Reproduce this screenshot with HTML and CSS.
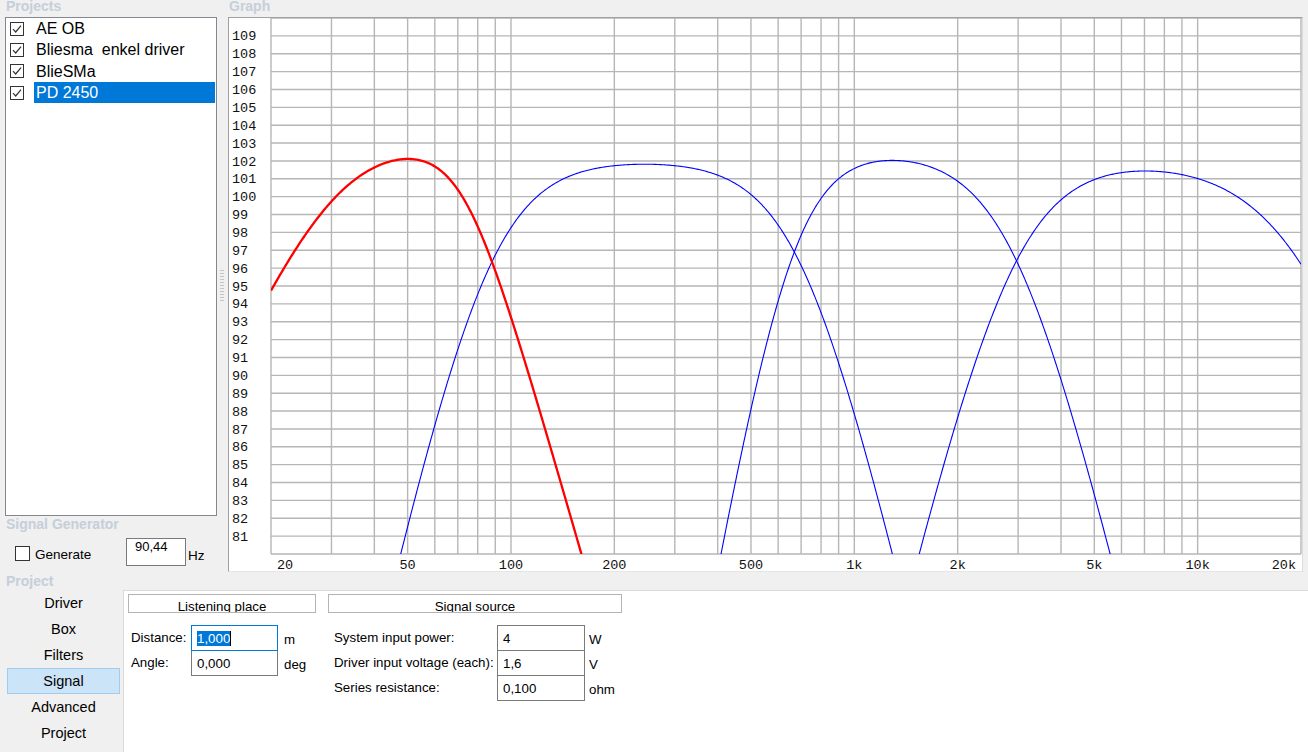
FILE: index.html
```html
<!DOCTYPE html>
<html>
<head>
<meta charset="utf-8">
<title>Speaker designer</title>
<link rel="stylesheet" href="styles.css">
</head>
<body>
<div class="top">
  <div class="left">
    <div class="hdr first">Projects</div>
    <div class="listbox">
      <div class="item">
        <svg class="chk" width="14" height="14" viewBox="0 0 14 14"><rect x="0.5" y="0.5" width="13" height="13" fill="#fff" stroke="#333"/><path d="M3 7.2 L5.7 10 L11 3.6" fill="none" stroke="#333" stroke-width="1.2"/></svg>
        <span class="lbl">AE OB</span>
      </div>
      <div class="item">
        <svg class="chk" width="14" height="14" viewBox="0 0 14 14"><rect x="0.5" y="0.5" width="13" height="13" fill="#fff" stroke="#333"/><path d="M3 7.2 L5.7 10 L11 3.6" fill="none" stroke="#333" stroke-width="1.2"/></svg>
        <span class="lbl">Bliesma&nbsp; enkel driver</span>
      </div>
      <div class="item">
        <svg class="chk" width="14" height="14" viewBox="0 0 14 14"><rect x="0.5" y="0.5" width="13" height="13" fill="#fff" stroke="#333"/><path d="M3 7.2 L5.7 10 L11 3.6" fill="none" stroke="#333" stroke-width="1.2"/></svg>
        <span class="lbl">BlieSMa</span>
      </div>
      <div class="item">
        <svg class="chk" width="14" height="14" viewBox="0 0 14 14"><rect x="0.5" y="0.5" width="13" height="13" fill="#fff" stroke="#333"/><path d="M3 7.2 L5.7 10 L11 3.6" fill="none" stroke="#333" stroke-width="1.2"/></svg>
        <span class="lbl selected">PD 2450</span>
      </div>
    </div>
    <div class="hdr">Signal Generator</div>
    <div class="gen">
      <div class="gencheck">
        <span class="box"></span>
        <span class="genlbl">Generate</span>
      </div>
      <div class="gentb">90,44</div>
      <span class="hz">Hz</span>
    </div>
  </div>
  <div class="splitter"><div class="grip"></div></div>
  <div class="graphcol">
    <div class="hdr first">Graph</div>
    <div class="graphbox">
      <svg id="graph" width="1073" height="553" viewBox="229 18 1073 553"></svg>
    </div>
  </div>
</div>
<div class="hdr proj">Project</div>
<div class="bottom">
  <div class="nav">
    <div>Driver</div>
    <div>Box</div>
    <div>Filters</div>
    <div class="sel">Signal</div>
    <div>Advanced</div>
    <div>Project</div>
  </div>
  <div class="content">
    <div class="col col1">
      <div class="grp">Listening place</div>
      <div class="rows">
        <div class="row">
          <span class="flbl">Distance:</span>
          <div class="tb focus"><span class="seltext">1,000</span><span class="caret"></span></div>
          <span class="unit">m</span>
        </div>
        <div class="row">
          <span class="flbl">Angle:</span>
          <div class="tb">0,000</div>
          <span class="unit">deg</span>
        </div>
      </div>
    </div>
    <div class="col col2">
      <div class="grp">Signal source</div>
      <div class="rows">
        <div class="row">
          <span class="flbl">System input power:</span>
          <div class="tb">4</div>
          <span class="unit">W</span>
        </div>
        <div class="row">
          <span class="flbl">Driver input voltage (each):</span>
          <div class="tb">1,6</div>
          <span class="unit">V</span>
        </div>
        <div class="row">
          <span class="flbl">Series resistance:</span>
          <div class="tb">0,100</div>
          <span class="unit">ohm</span>
        </div>
      </div>
    </div>
  </div>
</div>
<script src="script.js"></script>
</body>
</html>
```

FILE: styles.css
```css
* { box-sizing: border-box; }
html, body { margin: 0; padding: 0; }
body {
  width: 1308px;
  height: 752px;
  overflow: hidden;
  background: #f0f0f0;
  font-family: "Liberation Sans", Arial, sans-serif;
  color: #000;
}

.top { display: flex; height: 572px; }

.hdr {
  height: 17px;
  line-height: 17px;
  padding-left: 1px;
  font-size: 14px;
  font-weight: bold;
  color: #c5cfd9;
  white-space: nowrap;
}
.hdr.first { line-height: 13px; }
.hdr.proj { height: 18px; line-height: 18px; padding-left: 6px; }

.left {
  width: 217px;
  padding-left: 5px;
  display: flex;
  flex-direction: column;
}

.listbox {
  height: 499px;
  background: #fff;
  border: 1px solid #828790;
}
.item {
  display: flex;
  align-items: center;
  height: 21.33px;
}
.chk { margin-left: 4px; flex: none; }
.lbl {
  flex: 1;
  margin-left: 10px;
  margin-right: 1px;
  padding-left: 2px;
  height: 21px;
  line-height: 21px;
  font-size: 16px;
  white-space: nowrap;
}
.lbl.selected { background: #0078d7; color: #fff; }

.gen { display: flex; height: 39px; }
.gencheck {
  width: 121px;
  display: flex;
  align-items: flex-start;
  padding-left: 10px;
  padding-top: 13px;
}
.box {
  width: 15px;
  height: 15px;
  border: 1px solid #333;
  background: #fff;
}
.genlbl {
  margin-left: 5px;
  font-size: 13.5px;
  line-height: 15px;
  padding-top: 1px;
}
.gentb {
  margin-top: 5px;
  width: 60px;
  height: 28px;
  border: 1px solid #7a7a7a;
  background: #fff;
  padding-left: 8px;
  font-size: 13px;
  line-height: 15px;
}
.hz {
  margin-left: 2px;
  margin-top: 15px;
  font-size: 13.5px;
  line-height: 15px;
}

.splitter {
  width: 11px;
  display: flex;
  align-items: center;
  justify-content: center;
}
.grip {
  width: 4px;
  height: 34px;
  margin-right: 1px;
  background-image: radial-gradient(circle, #c4c4c4 0.9px, transparent 1.1px);
  background-size: 2px 3px;
}

.graphcol { width: 1075px; }
.graphbox {
  height: 555px;
  background: #fff;
  border-top: 1px solid #a0a0a0;
  border-left: 1px solid #a0a0a0;
  border-right: 1px solid #dcdcdc;
  border-bottom: 1px solid #e6e6e6;
}
#graph { display: block; }
.grid line { stroke: #b6b6b6; stroke-width: 1.4; }
.ax {
  font-family: "Liberation Mono", "Courier New", monospace;
  font-size: 13.5px;
  fill: #111;
}
.curve { fill: none; }
.curve.red { stroke: #ff0000; stroke-width: 2.3; }
.curve.blue { stroke: #0000ff; stroke-width: 1.1; }

.bottom { display: flex; height: 162px; }
.nav { width: 123px; padding-left: 7px; }
.nav div {
  width: 113px;
  height: 26px;
  line-height: 26px;
  text-align: center;
  font-size: 14.5px;
}
.nav .sel {
  background: #cce4f7;
  border: 1px solid #9fcdf0;
  line-height: 24px;
}

.content {
  flex: 1;
  background: #fff;
  border-top: 1px solid #dadada;
  border-left: 1px solid #dadada;
  display: flex;
  padding: 3px 0 0 4px;
  font-size: 13.3px;
}
.col1 { width: 188px; }
.col2 { width: 294px; margin-left: 12px; }
.grp {
  height: 19px;
  border: 1px solid #b4b4b4;
  background: #fff;
  overflow: hidden;
  text-align: center;
  line-height: 17px;
  padding-top: 3px;
  font-size: 13.3px;
}
.rows { margin-top: 12px; }
.row { display: flex; height: 26px; }
.row + .row { margin-top: -1px; }
.flbl { line-height: 26px; white-space: nowrap; }
.col1 .flbl { width: 63px; padding-left: 3px; }
.col2 .flbl { width: 169px; padding-left: 6px; }
.col1 .tb { width: 87px; }
.col2 .tb { width: 88px; }
.tb {
  height: 26px;
  border: 1px solid #7a7a7a;
  background: #fff;
  padding-left: 5px;
  display: flex;
  align-items: center;
  line-height: 15px;
  position: relative;
}
.tb.focus { border-color: #0078d7; z-index: 1; }
.seltext { background: #0078d7; color: #fff; }
.caret { width: 1px; height: 15px; background: #000; }
.unit { line-height: 26px; padding-top: 2px; }
.col1 .unit { margin-left: 6px; }
.col2 .unit { margin-left: 4px; }
```

FILE: script.js
```js
(function () {
  var NS = 'http://www.w3.org/2000/svg';
  var svg = document.getElementById('graph');
  var L = 271, R = 1301, T = 18, B = 554;
  var DEC = (R - L) / 3;
  function X(f) { return L + DEC * Math.log10(f / 20); }
  function Y(d) { return T + (110 - d) * (B - T) / 30; }
  function el(n, a, p) {
    var e = document.createElementNS(NS, n);
    for (var k in a) e.setAttribute(k, a[k]);
    (p || svg).appendChild(e);
    return e;
  }

  var grid = el('g', { 'class': 'grid' });
  for (var d = 80; d <= 110; d++) {
    var y = Y(d);
    el('line', { x1: L, x2: R, y1: y, y2: y }, grid);
  }
  [10, 100, 1000, 10000].forEach(function (dec) {
    for (var m = 1; m <= 9; m++) {
      var f = m * dec;
      if (f < 20 || f > 20000) continue;
      var x = X(f);
      el('line', { x1: x, x2: x, y1: T, y2: B }, grid);
    }
  });

  for (var v = 81; v <= 109; v++) {
    var t = el('text', { x: 232, y: Y(v) + 4.6, 'class': 'ax' });
    t.textContent = String(v);
  }
  var xl = [[20, '20'], [50, '50'], [100, '100'], [200, '200'], [500, '500'],
            [1000, '1k'], [2000, '2k'], [5000, '5k'], [10000, '10k'], [20000, '20k']];
  xl.forEach(function (p) {
    var a = { x: X(p[0]), y: 568.5, 'class': 'ax', 'text-anchor': 'middle' };
    if (p[0] === 20) { a.x = 277; a['text-anchor'] = 'start'; }
    if (p[0] === 20000) { a.x = 1296; a['text-anchor'] = 'end'; }
    var t = el('text', a);
    t.textContent = p[1];
  });

  var defs = el('defs', {});
  var cp = el('clipPath', { id: 'plotclip' }, defs);
  el('rect', { x: L, y: T, width: R - L, height: B - T }, cp);

  /* each response: gain G, high-pass (fh, order p, stage multiplier m), low-pass (fl, q, n) */
  var curves = [
    { G: 103.05, fh: 31, p: 4, m: 1, fl: 72.7, q: 6.7, n: 1, c: 'red' },
    { G: 102.05, fh: 86.4, p: 4.14, m: 2, fl: 704.8, q: 4.06, n: 2, c: 'blue' },
    { G: 102.6, fh: 658.6, p: 5.3, m: 2, fl: 2939, q: 3.96, n: 2, c: 'blue' },
    { G: 102.05, fh: 2896, p: 3.91, m: 2, fl: 20300, q: 3.02, n: 2, c: 'blue' }
  ];
  function db(f, k) {
    return k.G - 10 * k.m * Math.log10(1 + Math.pow(k.fh / f, k.p))
               - 10 * k.n * Math.log10(1 + Math.pow(f / k.fl, k.q));
  }
  [1, 2, 3, 0].forEach(function (i) {
    var k = curves[i];
    var pts = [];
    for (var x = L; x <= R; x += 1) {
      var f = 20 * Math.pow(10, (x - L) / DEC);
      var v = Math.max(db(f, k), 78);
      pts.push(x.toFixed(1) + ',' + Y(v).toFixed(2));
    }
    el('path', { d: 'M' + pts.join(' L'), 'class': 'curve ' + k.c, 'clip-path': 'url(#plotclip)' });
  });
})();
```
